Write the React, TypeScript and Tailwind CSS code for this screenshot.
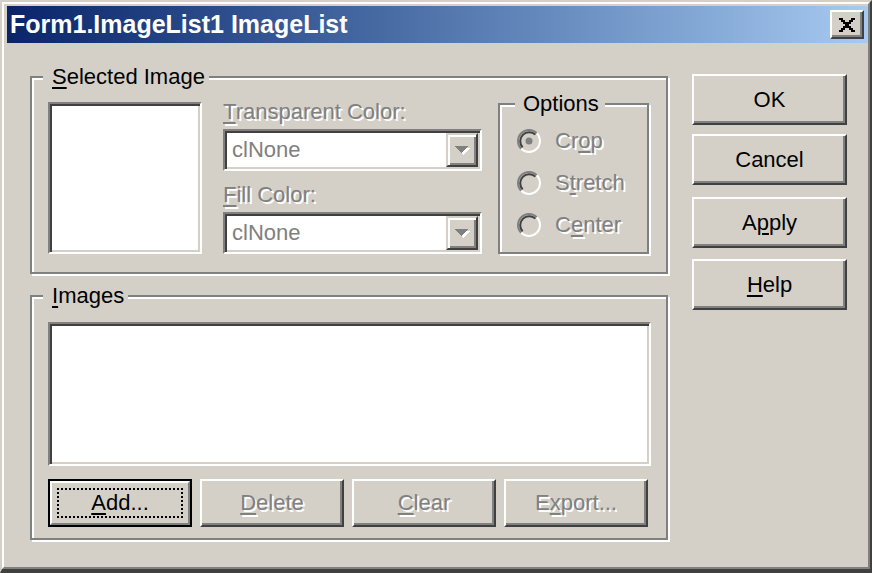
import React from "react"

const raised =
  "border-2 border-t-white border-l-white border-r-[#404040] border-b-[#404040] shadow-[inset_-2px_-2px_0_#808080]"
const sunken =
  "border-2 border-t-[#808080] border-l-[#808080] border-r-white border-b-white shadow-[inset_2px_2px_0_#404040,inset_-2px_-2px_0_#d4d0c8]"
const etched = "relative border-2 border-[#808080] shadow-[inset_2px_2px_0_#fff,2px_2px_0_#fff]"
const dim = "text-[#808080] [text-shadow:2px_2px_0_#fff]"

function U({ children }: { children: React.ReactNode }) {
  return <span className="underline decoration-2 underline-offset-[3px]">{children}</span>
}

function GroupLabel({ children, className }: { children: React.ReactNode; className: string }) {
  return (
    <span className={`absolute top-[-13px] h-[24px] leading-[24px] bg-[#d4d0c8] text-black ${className}`}>
      {children}
    </span>
  )
}

function Button({
  children,
  disabled,
  className = "",
}: {
  children: React.ReactNode
  disabled?: boolean
  className?: string
}) {
  return (
    <div className={`flex items-center justify-center ${raised} ${disabled ? dim : "text-black"} ${className}`}>
      <span className="leading-[24px]">{children}</span>
    </div>
  )
}

function Combo() {
  return (
    <div className={`flex h-[42px] w-[259px] bg-white p-[2px] ${sunken}`}>
      <div className="flex flex-1 items-center pl-[5px] leading-[24px] text-[#808080]">clNone</div>
      <div className="flex w-[32px] items-center justify-center border-2 border-t-[#d4d0c8] border-l-[#d4d0c8] border-r-[#404040] border-b-[#404040] bg-[#d4d0c8] shadow-[inset_2px_2px_0_#fff,inset_-2px_-2px_0_#808080]">
        <svg width="16" height="9" viewBox="0 0 16 9" shapeRendering="crispEdges">
          <polygon points="2,2 16,2 9,9" fill="#fff" />
          <polygon points="0,0 14,0 7,7" fill="#808080" />
        </svg>
      </div>
    </div>
  )
}

function Radio({ checked, children }: { checked?: boolean; children: React.ReactNode }) {
  return (
    <div className="flex h-[42px] items-center">
      <svg width="24" height="24" viewBox="0 0 24 24" className="ml-[17px]">
        <path d="M4.22 19.78A11 11 0 0 1 19.78 4.22" fill="none" stroke="#808080" strokeWidth="2" />
        <path d="M19.78 4.22A11 11 0 0 1 4.22 19.78" fill="none" stroke="#fff" strokeWidth="2" />
        <path d="M5.64 18.36A9 9 0 0 1 18.36 5.64" fill="none" stroke="#404040" strokeWidth="2" />
        {checked && <circle cx="12" cy="12" r="3.5" fill="#808080" />}
      </svg>
      <span className={`ml-[14px] leading-[24px] ${dim}`}>{children}</span>
    </div>
  )
}

export default function App() {
  return (
    <div className="h-[573px] w-[872px] border-t-2 border-l-2 border-r-2 border-b-[4px] border-t-[#d4d0c8] border-l-[#d4d0c8] border-r-[#404040] border-b-[#404040] bg-[#d4d0c8] font-['Liberation_Sans',Arial,sans-serif] text-[22px]">
      <div className="flex h-full flex-col border-2 border-t-white border-l-white border-r-[#808080] border-b-[#808080] pt-[2px] pl-[3px]">
        <div className="flex h-[37px] shrink-0 items-center justify-between bg-linear-to-r from-[#0a246a] to-[#a6caf0]">
          <span className="pl-[3px] text-[25px] font-bold leading-[37px] text-white">Form1.ImageList1 ImageList</span>
          <div className={`mr-[4px] flex h-[29px] w-[34px] items-center justify-center bg-[#d4d0c8] ${raised}`}>
            <svg width="16" height="14" viewBox="0 0 8 7" shapeRendering="crispEdges" fill="#000">
              <path d="M0 0h2v1H0zM6 0h2v1H6zM1 1h2v1H1zM5 1h2v1H5zM2 2h4v1H2zM3 3h2v1H3zM2 4h4v1H2zM1 5h2v1H1zM5 5h2v1H5zM0 6h2v1H0zM6 6h2v1H6z" />
            </svg>
          </div>
        </div>

        <div className="flex pl-[23px]">
          <div className="flex w-[638px] flex-col">
            <div className={`mt-[33px] flex h-[198px] ${etched}`}>
              <GroupLabel className="left-[11px] pl-[9px] pr-[4px]">
                <U>S</U>elected Image
              </GroupLabel>
              <div className={`ml-[16px] mt-[24px] h-[152px] w-[154px] bg-white ${sunken}`} />
              <div className="ml-[21px] mt-[22px] flex flex-col">
                <span className={`h-[24px] leading-[24px] ${dim}`}>
                  <U>T</U>ransparent Color:
                </span>
                <div className="mt-[5px]">
                  <Combo />
                </div>
                <span className={`mt-[12px] h-[24px] leading-[24px] ${dim}`}>
                  <U>F</U>ill Color:
                </span>
                <div className="mt-[5px]">
                  <Combo />
                </div>
              </div>
              <div className={`ml-[16px] mt-[25px] flex h-[151px] w-[151px] flex-col pt-[15px] ${etched}`}>
                <GroupLabel className="left-[15px] pl-[8px] pr-[6px]">Options</GroupLabel>
                <Radio checked>
                  Cr<U>o</U>p
                </Radio>
                <Radio>
                  S<U>t</U>retch
                </Radio>
                <Radio>
                  C<U>e</U>nter
                </Radio>
              </div>
            </div>

            <div className={`mt-[21px] flex h-[245px] flex-col pl-[16px] ${etched}`}>
              <GroupLabel className="left-[11px] pl-[9px] pr-[4px]">
                <U>I</U>mages
              </GroupLabel>
              <div className={`mt-[25px] h-[144px] w-[603px] bg-white ${sunken}`} />
              <div className="mt-[13px] flex gap-[8px]">
                <div className="flex h-[48px] w-[144px] border-2 border-black">
                  <div className="flex flex-1 border-2 border-t-white border-l-white border-r-[#808080] border-b-[#808080] p-[5px]">
                    <div className="flex flex-1 items-center justify-center border-2 border-dotted border-black text-black">
                      <span className="leading-[24px]">
                        <U>A</U>dd...
                      </span>
                    </div>
                  </div>
                </div>
                <Button disabled className="h-[48px] w-[144px]">
                  <U>D</U>elete
                </Button>
                <Button disabled className="h-[48px] w-[144px]">
                  <U>C</U>lear
                </Button>
                <Button disabled className="h-[48px] w-[144px]">
                  E<U>x</U>port...
                </Button>
              </div>
            </div>
          </div>

          <div className="ml-[24px] flex w-[155px] flex-col">
            <Button className="mt-[31px] h-[51px]">OK</Button>
            <Button className="mt-[9px] h-[51px]">Cancel</Button>
            <Button className="mt-[12px] h-[51px]">
              A<U>p</U>ply
            </Button>
            <Button className="mt-[11px] h-[51px]">
              <U>H</U>elp
            </Button>
          </div>
        </div>
      </div>
    </div>
  )
}
